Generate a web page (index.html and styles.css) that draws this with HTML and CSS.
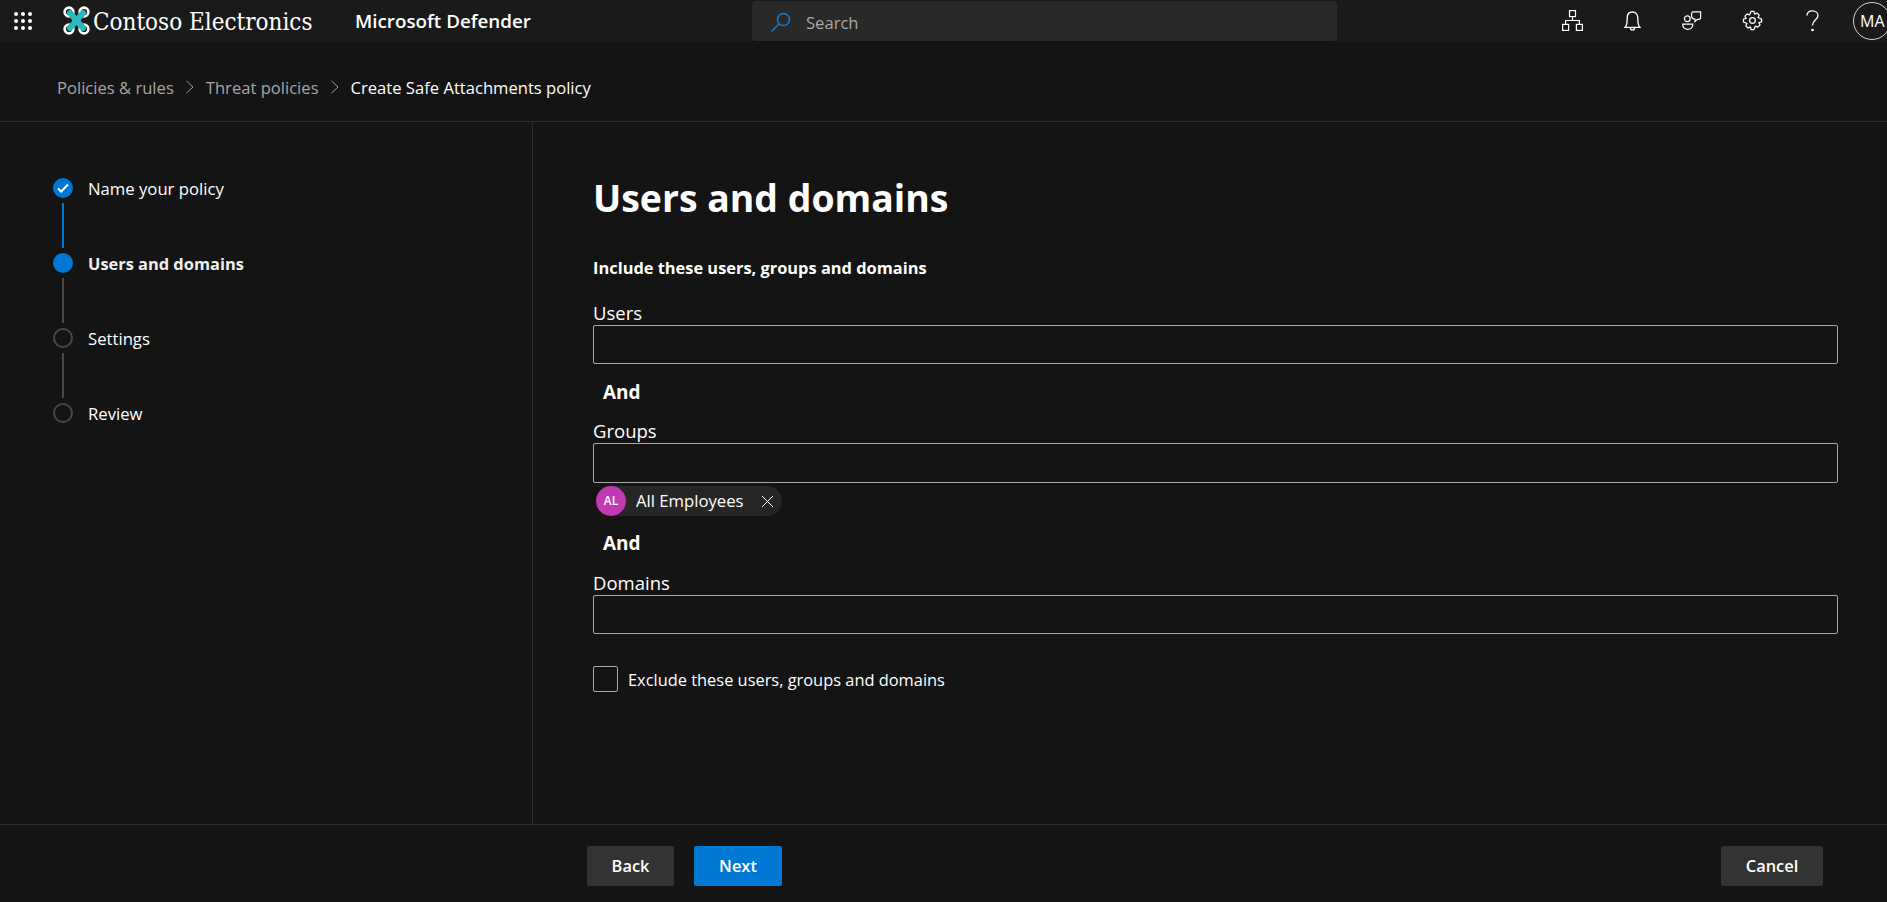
FILE: index.html
```html
<!DOCTYPE html>
<html lang="en">
<head>
  <meta charset="UTF-8" />
  <title>Create Safe Attachments policy</title>
  <link rel="stylesheet" href="styles.css">
</head>
<body>
  <header class="topbar">
    <div class="brand">
      <svg class="waffle" width="20" height="20" viewBox="0 0 20 20" fill="#fff">
        <circle cx="3" cy="3" r="2"/><circle cx="10" cy="3" r="2"/><circle cx="17" cy="3" r="2"/>
        <circle cx="3" cy="10" r="2"/><circle cx="10" cy="10" r="2"/><circle cx="17" cy="10" r="2"/>
        <circle cx="3" cy="17" r="2"/><circle cx="10" cy="17" r="2"/><circle cx="17" cy="17" r="2"/>
      </svg>
      <svg class="logo" width="27" height="29" viewBox="0 0 27 29">
        <g fill="none" stroke="#fff" stroke-width="2.6">
          <circle cx="6" cy="6" r="4.4"/><circle cx="21" cy="6" r="4.4"/>
          <circle cx="6" cy="23" r="4.4"/><circle cx="21" cy="23" r="4.4"/>
        </g>
        <path d="M7 7 L20 22 M20 7 L7 22" stroke="#2ab7bd" stroke-width="6" stroke-linecap="round"/>
        <rect x="9" y="10" width="9" height="9" fill="#2ab7bd"/>
      </svg>
      <span class="company">Contoso Electronics</span>
      <span class="product">Microsoft Defender</span>
    </div>
    <div class="search">
      <svg width="22" height="20" viewBox="0 0 22 20" fill="none" stroke="#1b78c8" stroke-width="1.5">
        <circle cx="13.5" cy="7.5" r="6"/>
        <path d="M9.2 11.8 L1.5 19.5"/>
      </svg>
      <span>Search</span>
    </div>
    <div class="actions">
      <div class="action">
        <svg width="21" height="21" viewBox="0 0 21 21" fill="none" stroke="#fff" stroke-width="1.2">
          <rect x="7.5" y="0.6" width="6" height="6"/><rect x="0.6" y="14.4" width="6" height="6"/><rect x="14.4" y="14.4" width="6" height="6"/>
          <path d="M10.5 6.6 V10.5 M3.6 14.4 V10.5 H17.4 V14.4"/>
        </svg>
      </div>
      <div class="action">
        <svg width="17" height="20" viewBox="0 0 16 19" fill="none" stroke="#fff" stroke-width="1.3">
          <path d="M1 15.5 H15 C13.3 14 13 12 13 6.5 C13 3.2 11 1 8 1 C5 1 3 3.2 3 6.5 C3 12 2.7 14 1 15.5 Z"/>
          <path d="M6 15.8 C6 18.6 10 18.6 10 15.8"/>
        </svg>
      </div>
      <div class="action">
        <svg width="20" height="20" viewBox="0 0 20 20" fill="none" stroke="#fff" stroke-width="1.2">
          <circle cx="5.3" cy="7.7" r="2.9"/>
          <path d="M0.7 13.2 H10.8 C10.8 20.2 0.7 20.2 0.7 13.2 Z"/>
          <path d="M9.6 2.4 C9.6 1.4 10.3 0.8 11.2 0.8 H18.6 V6.5 C18.6 7.7 17.8 8.4 16.8 8.4 H15.4 L13 10.6 V8.2 C10.8 8 9.6 6.8 9.6 5 Z"/>
        </svg>
      </div>
      <div class="action">
        <svg width="21" height="21" viewBox="0 0 22 22" fill="none" stroke="#fff" stroke-width="1.3">
          <circle cx="11" cy="11" r="3"/>
          <path d="M9.5 1.5 H12.5 L13.2 4.3 L15.6 3.1 L18 5.4 L16.8 7.9 L20.5 9.5 V12.5 L17.7 13.2 L18.9 15.6 L16.6 18 L14.1 16.8 L12.5 20.5 H9.5 L8.8 17.7 L6.4 18.9 L4 16.6 L5.2 14.1 L1.5 12.5 V9.5 L4.3 8.8 L3.1 6.4 L5.4 4 L7.9 5.2 Z" stroke-linejoin="round"/>
        </svg>
      </div>
      <div class="action">
        <svg width="13" height="22" viewBox="0 0 13 22" fill="none" stroke="#fff" stroke-width="1.3">
          <path d="M1 5.5 C1 2.5 3.2 0.8 6.3 0.8 C9.6 0.8 12 2.8 12 5.6 C12 9.8 6.5 10 6.5 15.5"/>
          <circle cx="6.5" cy="20" r="0.7" fill="#fff"/>
        </svg>
      </div>
      <div class="avatar">MA</div>
    </div>
  </header>

  <nav class="crumbs">
    <a>Policies &amp; rules</a>
    <svg width="12" height="14" viewBox="0 0 12 14" fill="none" stroke="#a19f9d"><path d="M2.5 1 L9 7 L2.5 13"/></svg>
    <a>Threat policies</a>
    <svg width="12" height="14" viewBox="0 0 12 14" fill="none" stroke="#a19f9d"><path d="M2.5 1 L9 7 L2.5 13"/></svg>
    <span>Create Safe Attachments policy</span>
  </nav>

  <main class="wizard">
    <aside class="steps">
      <div class="step done">
        <span class="dot">
          <svg width="12" height="10" viewBox="0 0 12 10" fill="none" stroke="#fff" stroke-width="2"><path d="M1 5.5 L4.2 8.5 L11 1.5"/></svg>
        </span>
        <span class="step-name">Name your policy</span>
      </div>
      <div class="line blue"></div>
      <div class="step current">
        <span class="dot"></span>
        <span class="step-name">Users and domains</span>
      </div>
      <div class="line"></div>
      <div class="step">
        <span class="dot"></span>
        <span class="step-name">Settings</span>
      </div>
      <div class="line"></div>
      <div class="step">
        <span class="dot"></span>
        <span class="step-name">Review</span>
      </div>
    </aside>

    <section class="content">
      <h1>Users and domains</h1>
      <p class="sub">Include these users, groups and domains</p>

      <label class="lbl first">Users</label>
      <div class="box"></div>
      <div class="and">And</div>

      <label class="lbl">Groups</label>
      <div class="box tall"></div>
      <div class="chip">
        <span class="initials">AL</span>
        <span class="chip-name">All Employees</span>
        <svg width="13" height="13" viewBox="0 0 13 13" stroke="#fff" stroke-width="1"><path d="M1 1 L12 12 M12 1 L1 12"/></svg>
      </div>
      <div class="and and-2">And</div>

      <label class="lbl after-chip">Domains</label>
      <div class="box"></div>

      <div class="exclude">
        <span class="check"></span>
        <span>Exclude these users, groups and domains</span>
      </div>
    </section>
  </main>

  <footer class="bottom">
    <div class="nav-btns">
      <button class="btn">Back</button>
      <button class="btn primary">Next</button>
    </div>
    <button class="btn cancel">Cancel</button>
  </footer>
</body>
</html>
```

FILE: styles.css
```css
body {
  margin: 0;
  height: 902px;
  overflow: hidden;
  display: flex;
  flex-direction: column;
  background: #141414;
  color: #fff;
  font-family: "Open Sans", "Noto Sans", sans-serif;
  font-size: 16px;
}

.topbar {
  height: 41px;
  flex: none;
  display: flex;
  align-items: center;
  background: #1a1a1a;
  position: relative;
}

.brand {
  display: flex;
  align-items: center;
  padding-left: 13px;
}

.waffle {
  margin-right: 30px;
}

.logo {
  margin-right: 3px;
}

.company {
  font-family: "DejaVu Serif Condensed", "DejaVu Serif", serif;
  font-stretch: condensed;
  font-size: 24px;
  width: 262px;
  padding-top: 2px;
  white-space: nowrap;
}

.product {
  font-size: 18.8px;
  font-weight: 600;
  white-space: nowrap;
}

.search {
  position: absolute;
  left: 752px;
  top: 1px;
  width: 585px;
  height: 40px;
  box-sizing: border-box;
  padding: 2px 0 0 18px;
  display: flex;
  align-items: center;
  gap: 14px;
  background: #292929;
  border-radius: 4px;
  color: #a8a8a8;
  font-size: 16.6px;
}

.actions {
  margin-left: auto;
  margin-right: -4px;
  display: flex;
  align-items: center;
}

.action {
  width: 60px;
  display: flex;
  justify-content: center;
}

.avatar {
  width: 38px;
  height: 38px;
  box-sizing: border-box;
  margin: 1px 0 0 11px;
  border: 1px solid #d0d0d0;
  border-radius: 50%;
  font-size: 16px;
  line-height: 36px;
  padding-left: 6px;
}

.crumbs {
  height: 81px;
  flex: none;
  box-sizing: border-box;
  padding: 12px 0 0 57px;
  display: flex;
  align-items: center;
  border-bottom: 1px solid #2b2b2b;
  font-size: 16.6px;
}

.crumbs a {
  color: #a6a6a6;
}

.crumbs svg {
  margin: 0 10px;
}

.wizard {
  flex: 1;
  display: flex;
  min-height: 0;
}

.steps {
  width: 533px;
  flex: none;
  box-sizing: border-box;
  border-right: 1px solid #2b2b2b;
  padding: 56px 0 0 53px;
}

.step {
  display: flex;
  align-items: center;
  height: 20px;
  gap: 15px;
  font-size: 16.7px;
}

.dot {
  width: 20px;
  height: 20px;
  flex: none;
  box-sizing: border-box;
  border: 2px solid #484848;
  border-radius: 50%;
  display: flex;
  align-items: center;
  justify-content: center;
}

.step.done .dot,
.step.current .dot {
  background: #0078d4;
  border-color: #0078d4;
}

.step.current .step-name {
  font-size: 16.4px;
  font-weight: 700;
  color: #f0f0f0;
}

.line {
  width: 2px;
  height: 45px;
  margin: 5px 0 5px 9px;
  background: #484848;
}

.line.blue {
  background: #0078d4;
}

.content {
  flex: 1;
  padding: 51px 49px 0 60px;
}

h1 {
  margin: 0;
  font-size: 37.4px;
  font-weight: 700;
  line-height: 50px;
}

.sub {
  margin: 33px 0 0;
  font-size: 16.4px;
  font-weight: 700;
  line-height: 24px;
}

.lbl {
  display: block;
  margin-top: 15px;
  font-size: 18.5px;
  line-height: 24px;
}

.lbl.first {
  margin-top: 21px;
}

.lbl.after-chip {
  margin-top: 16px;
}

.box {
  height: 39px;
  box-sizing: border-box;
  border: 1px solid #a6a6a6;
  border-radius: 2px;
}

.box.tall {
  height: 40px;
}

.and {
  margin: 16px 0 0 10px;
  font-size: 19px;
  font-weight: 700;
  line-height: 24px;
}

.chip {
  display: inline-flex;
  align-items: center;
  height: 30px;
  margin: 3px 0 0 3px;
  background: #262626;
  border-radius: 15px;
  padding-right: 8px;
  font-size: 16.7px;
}

.initials {
  width: 30px;
  height: 30px;
  border-radius: 50%;
  background: #c239b3;
  font-size: 12px;
  font-weight: 600;
  line-height: 30px;
  text-align: center;
}

.chip-name {
  margin: 0 17px 2px 10px;
}

.and-2 {
  margin-top: 15px;
}

.exclude {
  display: flex;
  align-items: center;
  gap: 10px;
  margin-top: 32px;
  font-size: 16.4px;
}

.check {
  width: 25px;
  height: 26px;
  box-sizing: border-box;
  border: 1px solid #a6a6a6;
  border-radius: 2px;
}

.bottom {
  height: 78px;
  flex: none;
  box-sizing: border-box;
  border-top: 1px solid #2b2b2b;
  display: flex;
  align-items: center;
  justify-content: space-between;
  padding: 4px 64px 0 587px;
}

.nav-btns {
  display: flex;
  gap: 20px;
}

.btn {
  width: 87px;
  height: 40px;
  border: none;
  border-radius: 2px;
  background: #333;
  color: #fff;
  font-family: inherit;
  font-size: 16.4px;
  font-weight: 600;
}

.btn.primary {
  width: 88px;
  background: #0078d4;
}

.btn.cancel {
  width: 102px;
}
```
